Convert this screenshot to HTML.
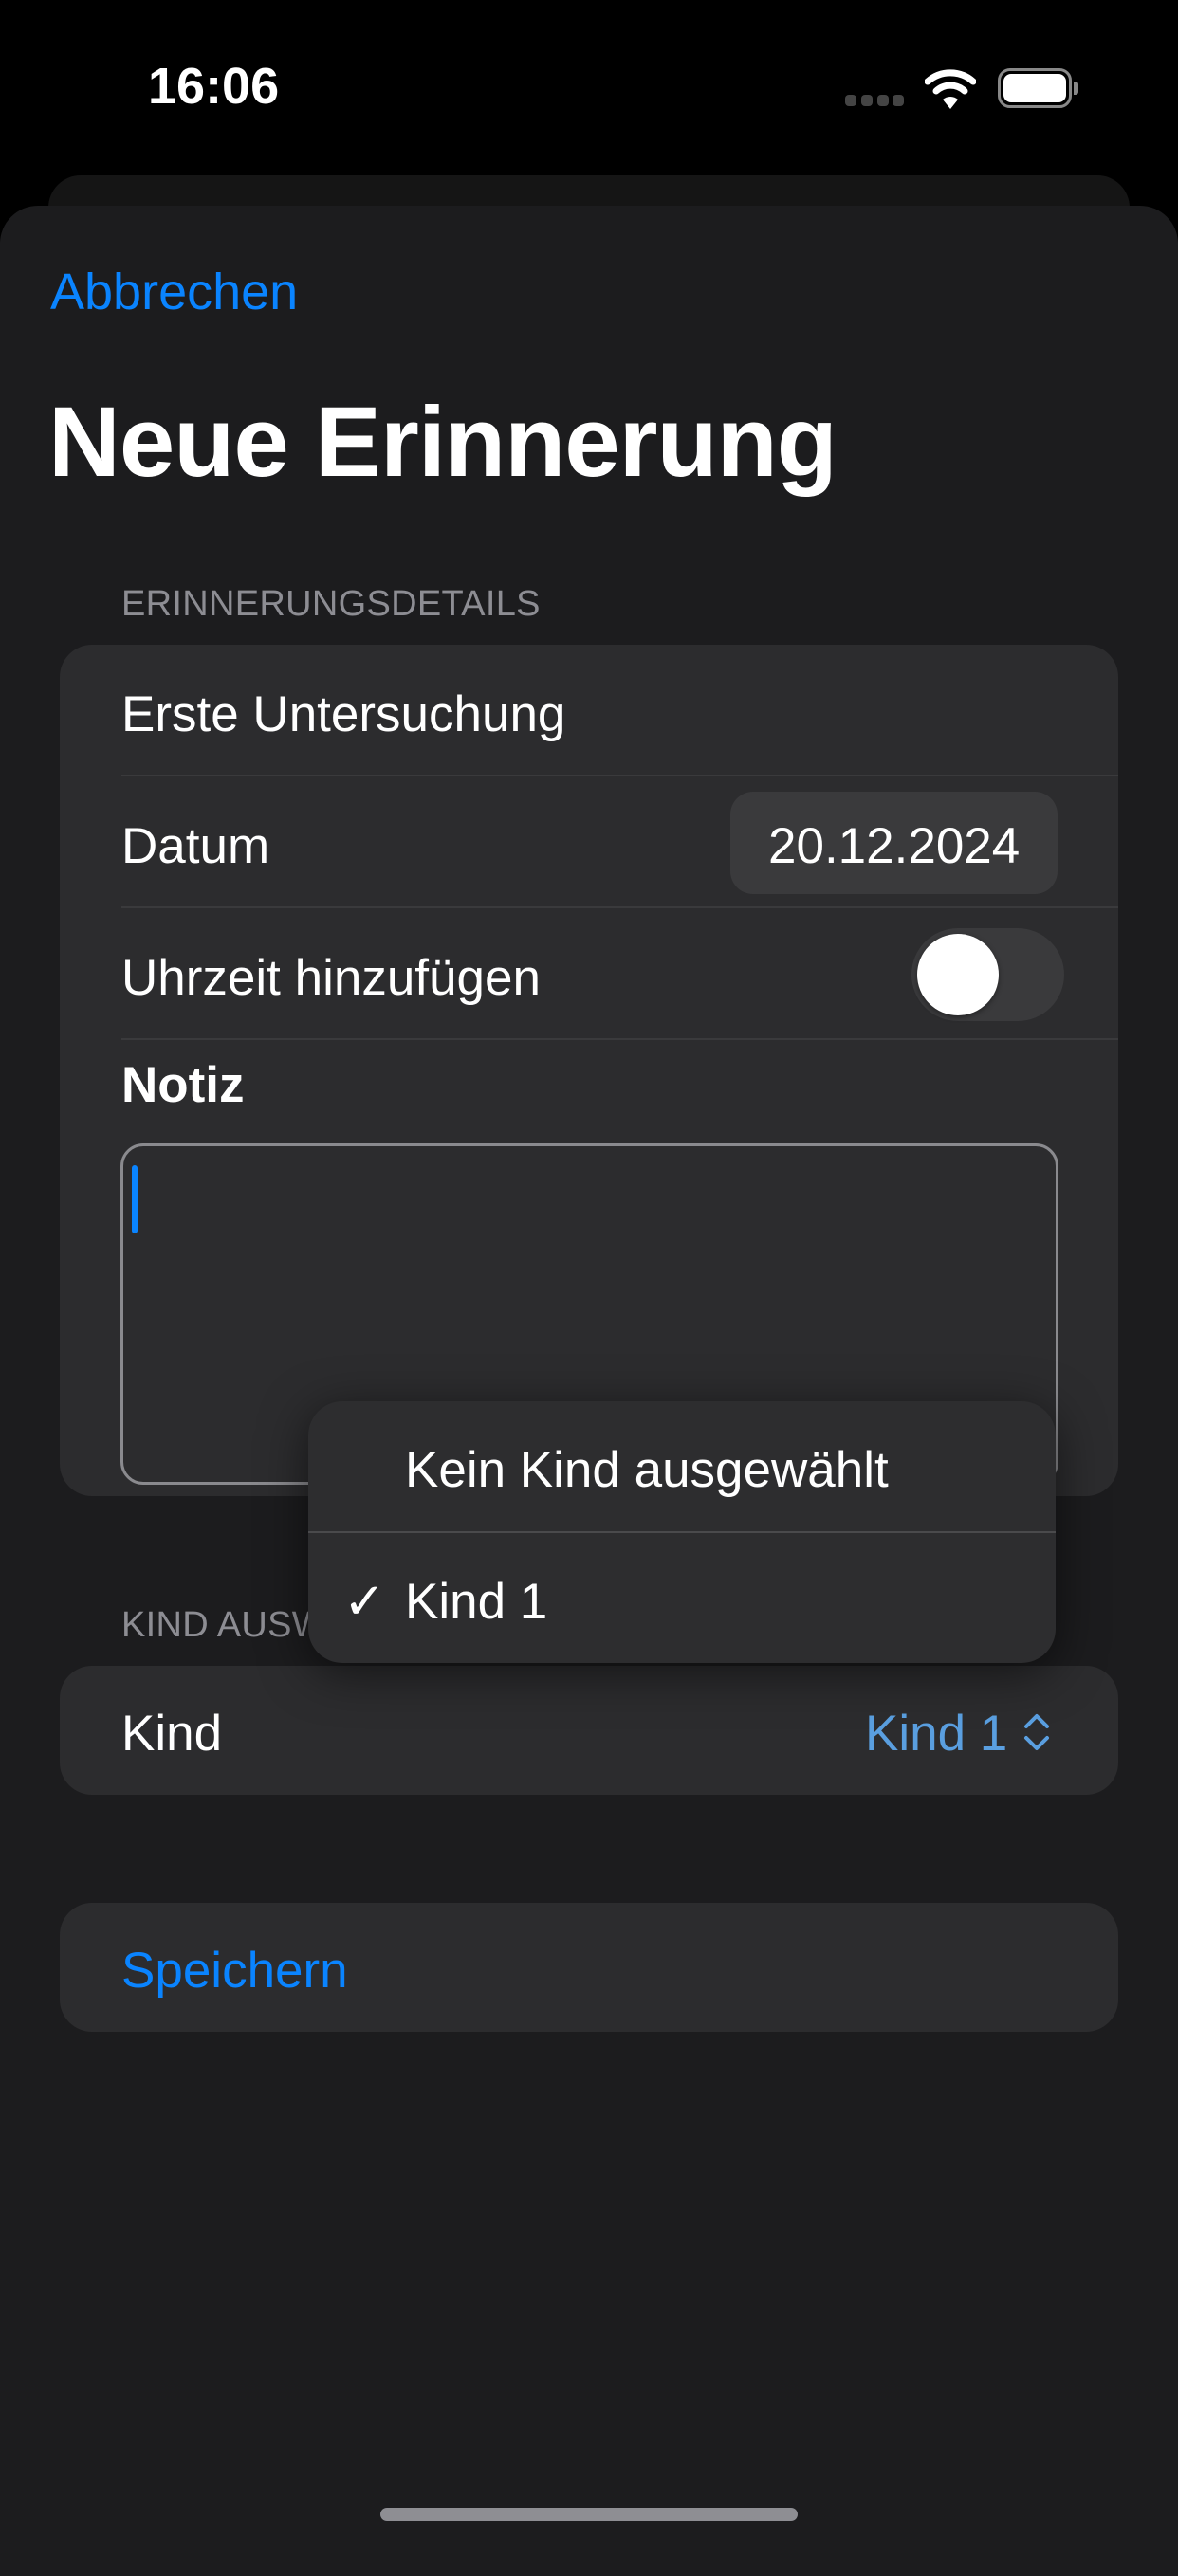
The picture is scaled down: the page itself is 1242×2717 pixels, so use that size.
<!DOCTYPE html>
<html><head><meta charset="utf-8"><style>
*{margin:0;padding:0;box-sizing:border-box}
html,body{width:1242px;height:2688px;background:#000;overflow:hidden;font-family:"Liberation Sans",sans-serif;color:#fff}
.abs{position:absolute}
.sheet{left:0;top:217px;width:1242px;height:2500px;background:#1c1c1e;border-radius:40px 40px 0 0}
.back{left:51px;top:185px;width:1140px;height:80px;background:#151515;border-radius:34px}
.card{left:63px;width:1116px;background:#2c2c2e;border-radius:34px}
.t{font-size:53px;line-height:1;white-space:nowrap}
.sep{height:2px;background:#3a3a3c}
.hdr{font-size:38px;color:#8d8d93;left:128px;letter-spacing:0.3px}
</style></head><body>
<div class="abs t" style="left:156px;top:64px;font-size:54px;font-weight:bold">16:06</div>
<div class="abs" style="left:891px;top:100px;width:62px;height:12px">
<span class="abs" style="left:0;width:12px;height:12px;border-radius:4px;background:#444"></span>
<span class="abs" style="left:17px;width:12px;height:12px;border-radius:4px;background:#444"></span>
<span class="abs" style="left:34px;width:12px;height:12px;border-radius:4px;background:#444"></span>
<span class="abs" style="left:50px;width:12px;height:12px;border-radius:4px;background:#444"></span>
</div>
<svg class="abs" style="left:975px;top:70px" width="54" height="46" viewBox="0 0 54 46">
<path d="M3 16 A36 36 0 0 1 51 16" stroke="#fff" stroke-width="7" fill="none" stroke-linecap="round"/>
<path d="M12 26 A22 22 0 0 1 42 26" stroke="#fff" stroke-width="7" fill="none" stroke-linecap="round"/>
<path d="M19 35 L27 45 L35 35 A12 12 0 0 0 19 35Z" fill="#fff"/>
</svg>
<div class="abs" style="left:1052px;top:72px;width:78px;height:42px;border:3px solid #888;border-radius:13px"></div>
<div class="abs" style="left:1058px;top:78px;width:66px;height:30px;background:#fff;border-radius:8px"></div>
<div class="abs" style="left:1132px;top:86px;width:5px;height:14px;background:#888;border-radius:0 3px 3px 0"></div>

<div class="abs back"></div>
<div class="abs sheet"></div>

<div class="abs t" style="left:53px;top:281px;font-size:54px;color:#0a84ff">Abbrechen</div>
<div class="abs t" style="left:51px;top:414px;font-size:105px;font-weight:bold;letter-spacing:-1px">Neue Erinnerung</div>

<div class="abs t hdr" style="top:618px">ERINNERUNGSDETAILS</div>
<div class="abs card" style="top:680px;height:898px"></div>
<div class="abs t" style="left:128px;top:727px">Erste Untersuchung</div>
<div class="abs sep" style="left:128px;top:817px;width:1051px"></div>
<div class="abs" style="left:770px;top:835px;width:345px;height:108px;background:#3a3a3c;border-radius:24px"></div>
<div class="abs t" style="left:810px;top:866px">20.12.2024</div>
<div class="abs t" style="left:128px;top:866px">Datum</div>
<div class="abs sep" style="left:128px;top:956px;width:1051px"></div>
<div class="abs t" style="left:128px;top:1005px">Uhrzeit hinzufügen</div>
<div class="abs" style="left:961px;top:979px;width:161px;height:98px;background:#3a3a3c;border-radius:49px"></div>
<div class="abs" style="left:967px;top:985px;width:86px;height:86px;background:#fff;border-radius:50%;box-shadow:0 2px 6px rgba(0,0,0,.4)"></div>
<div class="abs sep" style="left:128px;top:1095px;width:1051px"></div>
<div class="abs t" style="left:128px;top:1118px;font-weight:bold">Notiz</div>
<div class="abs" style="left:127px;top:1206px;width:989px;height:360px;border:3px solid #8a8a8e;border-radius:24px"></div>
<div class="abs" style="left:139px;top:1229px;width:6px;height:72px;background:#0a84ff;border-radius:3px"></div>

<div class="abs t hdr" style="top:1695px">KIND AUSWÄHLEN</div>
<div class="abs card" style="top:1757px;height:136px"></div>
<div class="abs t" style="left:128px;top:1802px">Kind</div>
<div class="abs t" style="left:912px;top:1802px;color:#5a9fe0">Kind 1</div>
<svg class="abs" style="left:1076px;top:1805px" width="34" height="44" viewBox="0 0 34 44">
<path d="M6 16 L17 5 L28 16 M6 28 L17 39 L28 28" stroke="#5a9fe0" stroke-width="4" fill="none" stroke-linecap="round" stroke-linejoin="round"/>
</svg>

<div class="abs card" style="top:2007px;height:136px"></div>
<div class="abs t" style="left:128px;top:2052px;color:#0a84ff">Speichern</div>

<div class="abs" style="left:325px;top:1478px;width:788px;height:276px;background:#2d2d2f;border-radius:36px;box-shadow:0 10px 50px rgba(0,0,0,.55)"></div>
<div class="abs t" style="left:427px;top:1524px">Kein Kind ausgewählt</div>
<div class="abs" style="left:325px;top:1615px;width:788px;height:2px;background:#4a4a4c"></div>
<div class="abs t" style="left:362px;top:1663px">✓</div>
<div class="abs t" style="left:427px;top:1663px">Kind 1</div>

<div class="abs" style="left:401px;top:2645px;width:440px;height:14px;background:#8e8e93;border-radius:7px"></div>
</body></html>
